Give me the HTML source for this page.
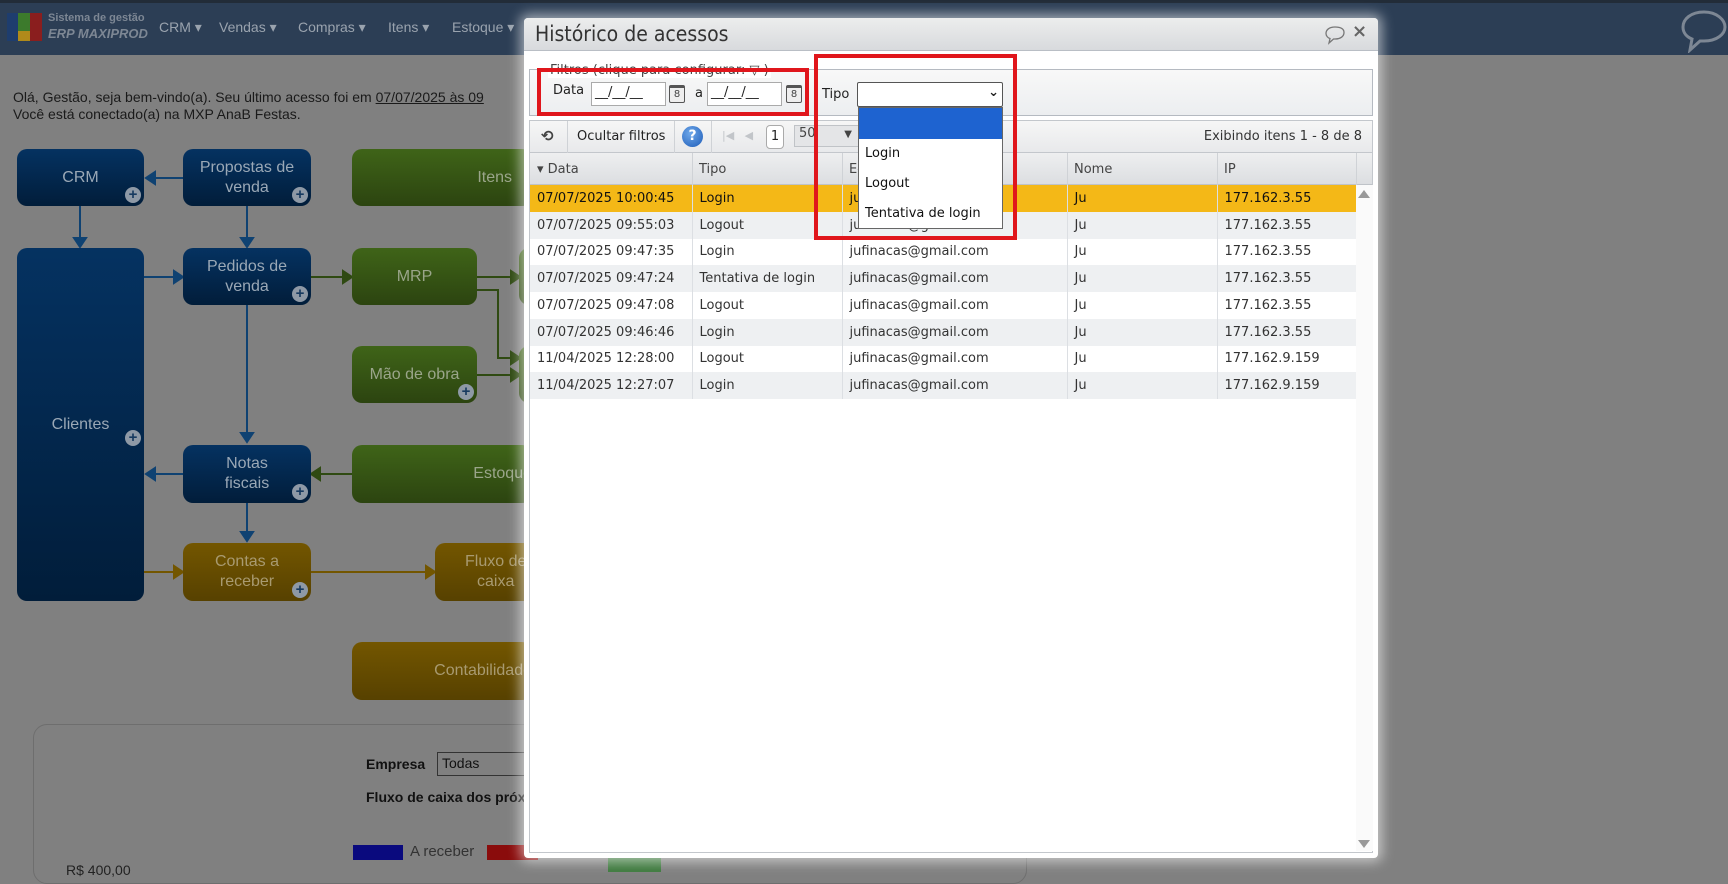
<!DOCTYPE html>
<html><head><meta charset="utf-8">
<style>
*{box-sizing:border-box;margin:0;padding:0}
body{width:1728px;height:872px;overflow:hidden;background:#808080;font-family:"DejaVu Sans",Verdana,sans-serif;position:relative}
.abs{position:absolute}
.nav{left:0;top:0;width:1728px;height:55px;background:#2c3e55;border-top:3px solid #222c38}
.menu{color:#9aa3ae;font-family:"Liberation Sans",sans-serif;font-size:14px;top:19px}
.box{position:absolute;border-radius:10px;color:#9aa8b6;font-family:"Liberation Sans",sans-serif;font-size:16px;text-align:center;display:flex;align-items:center;justify-content:center;line-height:20px}
.b{background:linear-gradient(#053261,#011d3a)}
.g{background:linear-gradient(#3f6418,#2c4410);color:#9aa58a}
.y{background:linear-gradient(#735600,#574100);color:#a89a70}
.plus{position:absolute;width:16px;height:16px;border-radius:50%;background:#8e99a6;color:#173a60;font-size:15px;line-height:16px;font-weight:bold;text-align:center;right:3px;bottom:3px}
.dlg{left:524px;top:18px;width:854px;height:840px;background:#fff;border-radius:4px;box-shadow:0 0 12px 4px rgba(255,255,255,.55)}
.title{left:0;top:0;width:854px;height:33px;background:linear-gradient(#eceded,#d8dadd);border-bottom:1px solid #b9bec5;border-radius:4px 4px 0 0}
.fb{left:5px;top:51px;width:844px;height:47px;border:1px solid #b5bac1;background:linear-gradient(#f8f8f8,#eceef0)}
.inp{position:absolute;height:24px;border:1px solid #aaa;background:#fff;font-size:13px;padding:2px 3px;color:#222}
.tb{left:5px;top:102px;width:844px;height:33px;border:1px solid #c3c7cc;background:linear-gradient(#f6f6f6,#e8e9eb);font-size:13px;color:#222}
.sep{position:absolute;top:0;width:1px;height:32px;background:#cfd2d6}
table{border-collapse:collapse;font-size:13px;color:#333}
td{height:26.75px;padding:0 7px;border-right:1px solid #dcdfe3;white-space:nowrap;overflow:hidden}
tr.alt td{background:#eef0f2}
tr.sel td{background:#f4b817;color:#111}
.red{position:absolute;border:4px solid #e0161c}
.cal{position:absolute;width:16px;height:18px;border:1.5px solid #555;border-top-width:3px;border-radius:2px;font-size:10px;text-align:center;color:#444;background:#eee;line-height:13px}
</style></head><body>
<div class="abs nav"></div>
<div class="abs" style="left:7px;top:13px;width:11px;height:28px;background:#1e3d6e"></div>
<div class="abs" style="left:18px;top:13px;width:12px;height:18px;background:#3c7a2c"></div>
<div class="abs" style="left:18px;top:31px;width:12px;height:10px;background:#b08a1a"></div>
<div class="abs" style="left:30px;top:13px;width:12px;height:28px;background:#8a1e1e"></div>
<div class="abs" style="left:48px;top:12px;color:#7d8794;font-family:'Liberation Sans',sans-serif;font-size:11px;font-weight:bold">Sistema de gestão</div>
<div class="abs" style="left:48px;top:26px;color:#7d8794;font-family:'Liberation Sans',sans-serif;font-size:13px;font-weight:bold;font-style:italic">ERP MAXIPROD</div>
<div class="abs menu" style="left:159px">CRM ▾</div>
<div class="abs menu" style="left:219px">Vendas ▾</div>
<div class="abs menu" style="left:298px">Compras ▾</div>
<div class="abs menu" style="left:388px">Itens ▾</div>
<div class="abs menu" style="left:452px">Estoque ▾</div>
<svg class="abs" style="left:1680px;top:9px" width="48" height="44" viewBox="0 0 48 44"><path d="M24 3C11 3 3 10 3 18c0 6 4 10 9 12l-2 11 10-9h4c13 0 21-7 21-14S37 3 24 3z" fill="none" stroke="#7d8794" stroke-width="3"/></svg>

<div class="abs" style="left:13px;top:89px;font-family:'Liberation Sans',sans-serif;font-size:14px;color:#1a1a1a;line-height:17px">Olá, Gestão, seja bem-vindo(a). Seu último acesso foi em <u>07/07/2025 às 09</u><br>Você está conectado(a) na MXP AnaB Festas.</div>

<svg class="abs" style="left:0;top:140px" width="524" height="500">
<g stroke="#0f4272" stroke-width="2" fill="#0f4272">
<line x1="80" y1="66" x2="80" y2="100"/><path d="M74 98h12l-6 9z"/>
<line x1="247" y1="66" x2="247" y2="100"/><path d="M241 98h12l-6 9z"/>
<line x1="183" y1="38" x2="156" y2="38"/><path d="M146 38l9-6v12z"/>
<line x1="144" y1="137" x2="175" y2="137"/><path d="M183 137l-9-6v12z"/>
<line x1="247" y1="165" x2="247" y2="295"/><path d="M241 293h12l-6 9z"/>
<line x1="183" y1="334" x2="156" y2="334"/><path d="M146 334l9-6v12z"/>
<line x1="247" y1="363" x2="247" y2="394"/><path d="M241 392h12l-6 9z"/>
</g>
<g stroke="#2f4a12" stroke-width="2" fill="#2f4a12">
<line x1="311" y1="137" x2="344" y2="137"/><path d="M352 137l-9-6v12z"/>
<line x1="477" y1="137" x2="512" y2="137"/><path d="M520 137l-9-6v12z"/>
<polyline fill="none" points="477,150 498,150 498,218 512,218"/><path d="M520 218l-9-6v12z"/>
<line x1="477" y1="235" x2="512" y2="235"/><path d="M520 235l-9-6v12z"/>
<line x1="352" y1="334" x2="320" y2="334"/><path d="M311 334l9-6v12z"/>
</g>
<g stroke="#735600" stroke-width="2" fill="#735600">
<line x1="144" y1="432" x2="175" y2="432"/><path d="M183 432l-9-6v12z"/>
<line x1="311" y1="432" x2="427" y2="432"/><path d="M435 432l-9-6v12z"/>
</g>
</svg>
<div class="box b" style="left:17px;top:149px;width:127px;height:57px">CRM<span class="plus">+</span></div>
<div class="box b" style="left:183px;top:149px;width:128px;height:57px">Propostas de<br>venda<span class="plus">+</span></div>
<div class="box g" style="left:352px;top:149px;width:180px;height:57px;justify-content:flex-end;padding-right:20px">Itens</div>
<div class="box b" style="left:17px;top:248px;width:127px;height:353px">Clientes<span class="plus" style="bottom:155px">+</span></div>
<div class="box b" style="left:183px;top:248px;width:128px;height:57px">Pedidos de<br>venda<span class="plus">+</span></div>
<div class="box g" style="left:352px;top:248px;width:125px;height:57px">MRP</div>
<div class="box g" style="left:519px;top:248px;width:20px;height:57px"></div>
<div class="box g" style="left:352px;top:346px;width:125px;height:57px">Mão de obra<span class="plus">+</span></div>
<div class="box g" style="left:519px;top:346px;width:20px;height:57px"></div>
<div class="box b" style="left:183px;top:445px;width:128px;height:58px">Notas<br>fiscais<span class="plus">+</span></div>
<div class="box g" style="left:352px;top:445px;width:180px;height:58px;justify-content:flex-end;padding-right:0">Estoque</div>
<div class="box y" style="left:183px;top:543px;width:128px;height:58px">Contas a<br>receber<span class="plus">+</span></div>
<div class="box y" style="left:435px;top:543px;width:100px;height:58px;justify-content:flex-start;padding-left:30px">Fluxo de<br>caixa</div>
<div class="box y" style="left:352px;top:642px;width:180px;height:58px;justify-content:flex-end;padding-right:0">Contabilidade</div>

<div class="abs" style="left:33px;top:724px;width:994px;height:160px;border:1px solid #6e6e6e;border-radius:14px"></div>
<div class="abs" style="left:366px;top:756px;font-size:14px;font-weight:bold;color:#111;font-family:'Liberation Sans',sans-serif">Empresa</div>
<div class="abs" style="left:437px;top:752px;width:100px;height:24px;border:1px solid #333;font-size:14px;padding:2px 4px;color:#111;font-family:'Liberation Sans',sans-serif">Todas</div>
<div class="abs" style="left:366px;top:789px;font-size:14px;font-weight:bold;color:#111;font-family:'Liberation Sans',sans-serif">Fluxo de caixa dos próximos</div>
<div class="abs" style="left:353px;top:845px;width:50px;height:15px;background:#0a0a7e"></div>
<div class="abs" style="left:410px;top:843px;font-size:15px;color:#333;font-family:'Liberation Sans',sans-serif">A receber</div>
<div class="abs" style="left:487px;top:845px;width:51px;height:15px;background:#8a0c0c"></div>
<div class="abs" style="left:608px;top:857px;width:53px;height:15px;background:#3e7a3e"></div>
<div class="abs" style="left:66px;top:862px;font-size:14px;color:#222;font-family:'Liberation Sans',sans-serif">R$ 400,00</div>

<div class="abs dlg">
 <div class="abs title"><div class="abs" style="left:11px;top:4px;font-size:21px;color:#333;font-family:'DejaVu Sans Condensed','DejaVu Sans',sans-serif">Histórico de acessos</div>
 <svg class="abs" style="left:800px;top:7px" width="22" height="20" viewBox="0 0 22 20"><path d="M11 2C5 2 2 5 2 8.5c0 2.5 2 4.5 4 5l-1 4.5 4.5-4h1.5c6 0 9-3 9-6.5S17 2 11 2z" fill="none" stroke="#777" stroke-width="1.3"/></svg>
 <div class="abs" style="left:828px;top:3px;font-size:18px;font-weight:bold;color:#666">×</div>
 </div>
 <div class="abs fb"></div>
 <div class="abs" style="left:24px;top:45px;font-size:13px;color:#444;background:#fff;padding:0 2px">Filtros (clique para configurar: ▽ )</div>
 <div class="abs" style="left:29px;top:65px;font-size:13px;color:#222">Data</div>
 <div class="inp" style="left:67px;top:64px;width:75px">__/__/__</div>
 <div class="cal" style="left:145px;top:67px">8</div>
 <div class="abs" style="left:171px;top:68px;font-size:13px;color:#222">a</div>
 <div class="inp" style="left:183px;top:64px;width:75px">__/__/__</div>
 <div class="cal" style="left:262px;top:67px">8</div>
 <div class="abs" style="left:298px;top:69px;font-size:13px;color:#222">Tipo</div>
 <div class="inp" style="left:333px;top:64px;width:146px;height:25px;border:1px solid #555;border-radius:2px;text-align:right;font-weight:bold">⌄</div>

 <div class="abs tb">
  <div class="abs" style="left:11px;top:6px;font-size:15px;font-weight:bold;color:#444">⟲</div>
  <div class="sep" style="left:37px"></div>
  <div class="abs" style="left:47px;top:8px">Ocultar filtros</div>
  <div class="sep" style="left:144px"></div>
  <div class="abs" style="left:152px;top:5px;width:21px;height:21px;border-radius:50%;background:radial-gradient(circle at 40% 35%,#6ea8ea,#1e5cb8);color:#fff;font-weight:bold;text-align:center;line-height:21px;font-size:14px">?</div>
  <div class="sep" style="left:181px"></div>
  <div class="abs" style="left:192px;top:8px;color:#c2c5c9;font-size:11px">|◀&nbsp;&nbsp;&nbsp;◀</div>
  <div class="abs" style="left:236px;top:4px;width:18px;height:24px;border:1px solid #aaa;border-radius:4px;background:#fff;text-align:center;line-height:22px">1</div>
  <div class="abs" style="left:264px;top:4px;width:65px;height:22px;border:1px solid #c0c3c7;background:#e4e5e7;padding-left:4px;color:#444">50<span style="position:absolute;right:6px;top:3px;font-size:10px">▼</span></div>
  <div class="abs" style="right:10px;top:8px;color:#333">Exibindo itens 1 - 8 de 8</div>
 </div>

 <div class="abs" style="left:5px;top:135px;width:844px;height:700px;border:1px solid #c3c7cc;border-top:none">
  <div class="abs" style="left:0;top:0;width:842px;height:32px;background:linear-gradient(#eeeff0,#dcdee1);border-bottom:1px solid #bfc3c8;font-size:13px;color:#444">
   <div class="abs" style="left:7px;top:9px">▾ Data</div>
   <div class="abs" style="left:169px;top:9px">Tipo</div>
   <div class="abs" style="left:319px;top:9px">E-mail</div>
   <div class="abs" style="left:544px;top:9px">Nome</div>
   <div class="abs" style="left:694px;top:9px">IP</div>
   <div class="sep" style="left:162px"></div><div class="sep" style="left:312px"></div><div class="sep" style="left:537px"></div><div class="sep" style="left:687px"></div><div class="sep" style="left:826px"></div>
  </div>
  <table class="abs" style="left:0;top:32px;width:826px;table-layout:fixed">
   <colgroup><col style="width:162px"><col style="width:150px"><col style="width:225px"><col style="width:150px"><col style="width:139px"></colgroup>
   <tr class="sel"><td>07/07/2025 10:00:45</td><td>Login</td><td>jufinacas@gmail.com</td><td>Ju</td><td>177.162.3.55</td></tr>
   <tr class="alt"><td>07/07/2025 09:55:03</td><td>Logout</td><td>jufinacas@gmail.com</td><td>Ju</td><td>177.162.3.55</td></tr>
   <tr><td>07/07/2025 09:47:35</td><td>Login</td><td>jufinacas@gmail.com</td><td>Ju</td><td>177.162.3.55</td></tr>
   <tr class="alt"><td>07/07/2025 09:47:24</td><td>Tentativa de login</td><td>jufinacas@gmail.com</td><td>Ju</td><td>177.162.3.55</td></tr>
   <tr><td>07/07/2025 09:47:08</td><td>Logout</td><td>jufinacas@gmail.com</td><td>Ju</td><td>177.162.3.55</td></tr>
   <tr class="alt"><td>07/07/2025 09:46:46</td><td>Login</td><td>jufinacas@gmail.com</td><td>Ju</td><td>177.162.3.55</td></tr>
   <tr><td>11/04/2025 12:28:00</td><td>Logout</td><td>jufinacas@gmail.com</td><td>Ju</td><td>177.162.9.159</td></tr>
   <tr class="alt"><td>11/04/2025 12:27:07</td><td>Login</td><td>jufinacas@gmail.com</td><td>Ju</td><td>177.162.9.159</td></tr>
  </table>
  <div class="abs" style="left:826px;top:32px;width:17px;height:666px;background:#fafafa"></div>
  <div class="abs" style="left:828px;top:37px;width:0;height:0;border-left:6px solid transparent;border-right:6px solid transparent;border-bottom:8px solid #999"></div>
  <div class="abs" style="left:828px;top:687px;width:0;height:0;border-left:6px solid transparent;border-right:6px solid transparent;border-top:8px solid #999"></div>
 </div>

 <div class="abs" style="left:334px;top:89px;width:145px;height:122px;background:#fff;border:1px solid #666;font-size:13px;color:#111">
  <div style="height:31px;background:#1e63d0"></div>
  <div style="position:absolute;left:6px;top:38px">Login</div>
  <div style="position:absolute;left:6px;top:68px">Logout</div>
  <div style="position:absolute;left:6px;top:98px">Tentativa de login</div>
 </div>
</div>

<div class="red" style="left:537px;top:68px;width:272px;height:48px"></div>
<div class="red" style="left:814px;top:54px;width:203px;height:186px"></div>
</body></html>
